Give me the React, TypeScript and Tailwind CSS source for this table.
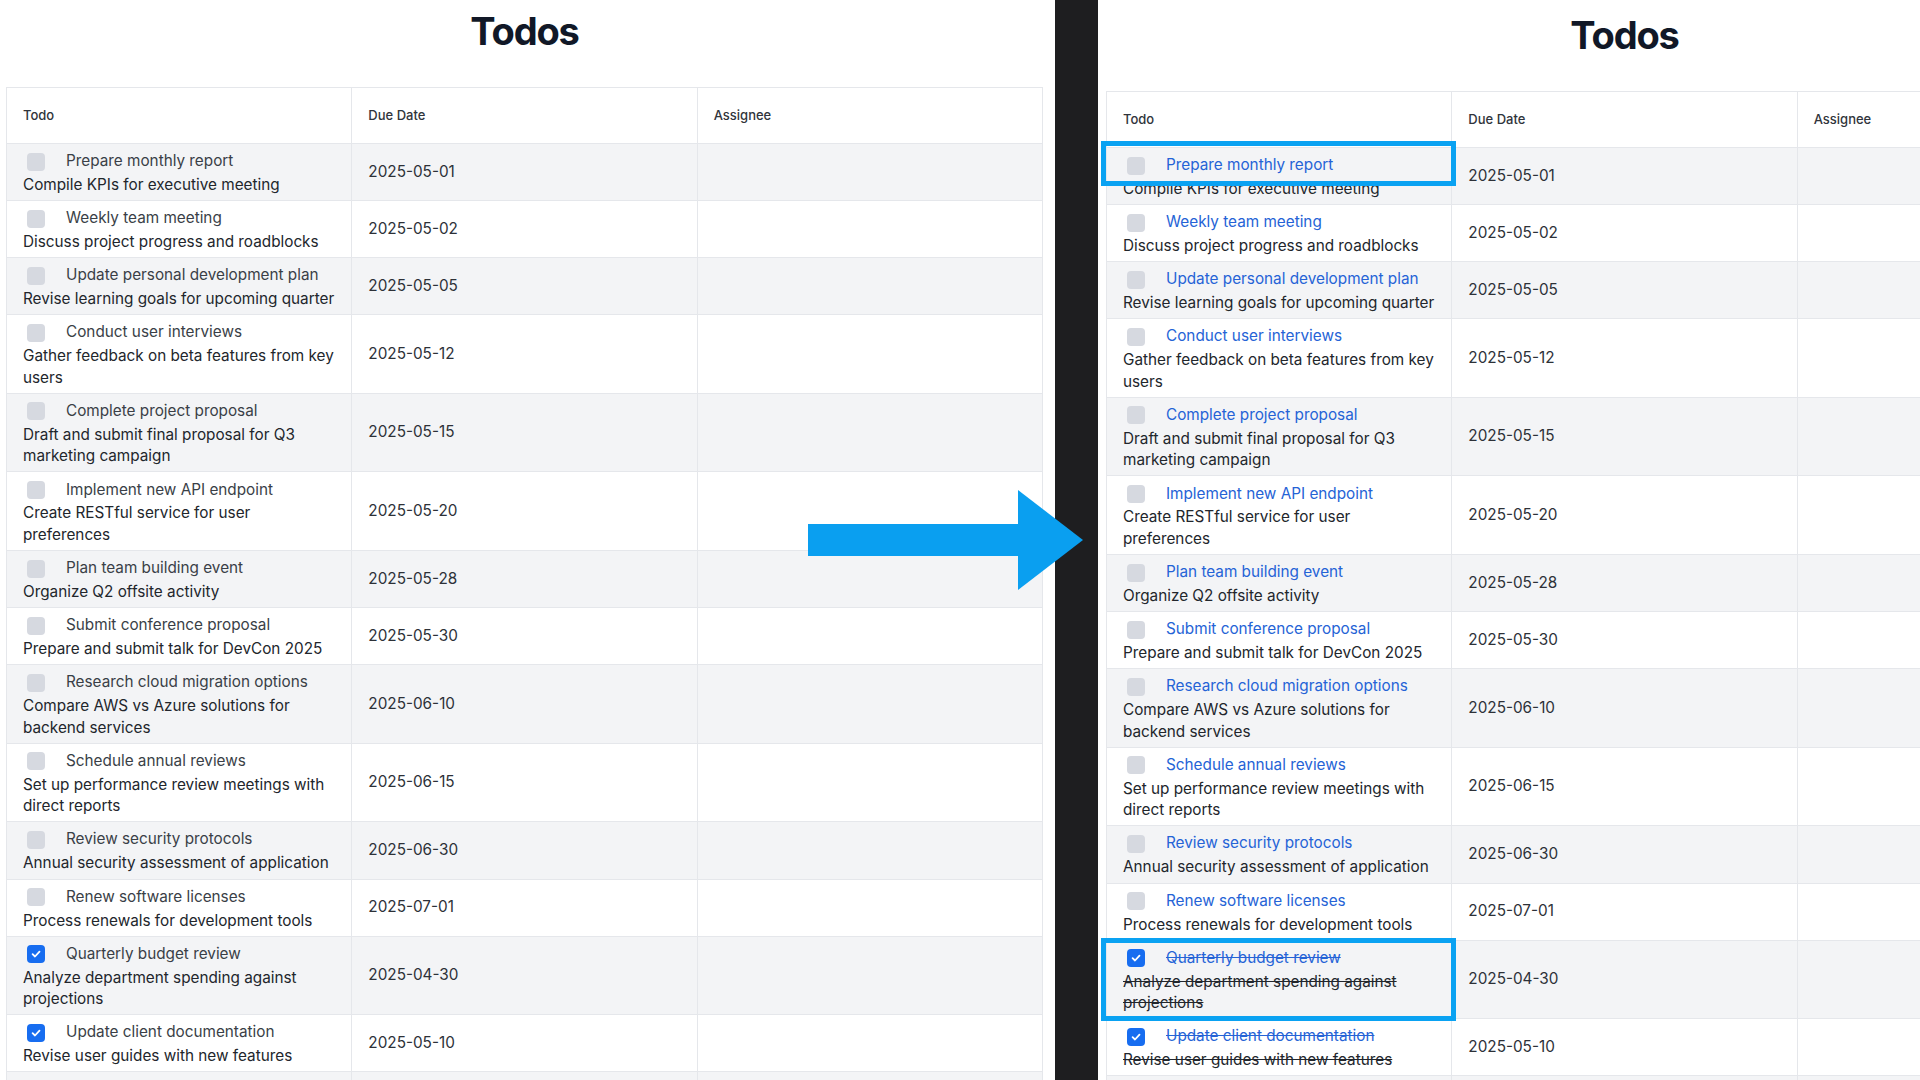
import React from "react";

type Todo = {
  title: string;
  desc: string[];
  due: string;
  done?: boolean;
};

const todos: Todo[] = [
  { title: "Prepare monthly report", desc: ["Compile KPIs for executive meeting"], due: "2025-05-01" },
  { title: "Weekly team meeting", desc: ["Discuss project progress and roadblocks"], due: "2025-05-02" },
  { title: "Update personal development plan", desc: ["Revise learning goals for upcoming quarter"], due: "2025-05-05" },
  { title: "Conduct user interviews", desc: ["Gather feedback on beta features from key", "users"], due: "2025-05-12" },
  { title: "Complete project proposal", desc: ["Draft and submit final proposal for Q3", "marketing campaign"], due: "2025-05-15" },
  { title: "Implement new API endpoint", desc: ["Create RESTful service for user", "preferences"], due: "2025-05-20" },
  { title: "Plan team building event", desc: ["Organize Q2 offsite activity"], due: "2025-05-28" },
  { title: "Submit conference proposal", desc: ["Prepare and submit talk for DevCon 2025"], due: "2025-05-30" },
  { title: "Research cloud migration options", desc: ["Compare AWS vs Azure solutions for", "backend services"], due: "2025-06-10" },
  { title: "Schedule annual reviews", desc: ["Set up performance review meetings with", "direct reports"], due: "2025-06-15" },
  { title: "Review security protocols", desc: ["Annual security assessment of application"], due: "2025-06-30" },
  { title: "Renew software licenses", desc: ["Process renewals for development tools"], due: "2025-07-01" },
  { title: "Quarterly budget review", desc: ["Analyze department spending against", "projections"], due: "2025-04-30", done: true },
  { title: "Update client documentation", desc: ["Revise user guides with new features"], due: "2025-05-10", done: true },
];

function Checkbox({ checked }: { checked?: boolean }) {
  if (checked) {
    return (
      <span className="ml-[4px] mr-[21px] flex h-[18px] w-[18px] shrink-0 items-center justify-center rounded-[4px] bg-[#176df0]">
        <svg width="12" height="12" viewBox="0 0 12 12" fill="none">
          <path d="M2.6 6.2 5 8.5 9.5 3.7" stroke="white" strokeWidth="1.8" strokeLinecap="round" strokeLinejoin="round" />
        </svg>
      </span>
    );
  }
  return <span className="ml-[4px] mr-[21px] h-[18px] w-[18px] shrink-0 rounded-[4px] bg-[#d6d9e0]" />;
}

function TodoPage({ after }: { after?: boolean }) {
  return (
    <div className="w-[1049px] shrink-0 px-[6px] pt-[11px]">
      <h1 className="h-[40px] text-center text-[38px] leading-[40px] font-bold tracking-[-0.03em] text-[#111827]">Todos</h1>
      <table className="mt-[36px] w-full table-fixed border-collapse border border-[#e5e7eb] text-[15.3px]">
        <thead>
          <tr className="h-[56px] border-b border-[#e5e7eb]">
            <th className="border-r border-[#e5e7eb] px-4 text-left text-[13px] font-medium text-[#30343b]">Todo</th>
            <th className="border-r border-[#e5e7eb] px-4 text-left text-[13px] font-medium text-[#30343b]">Due Date</th>
            <th className="px-4 text-left text-[13px] font-medium text-[#30343b]">Assignee</th>
          </tr>
        </thead>
        <tbody>
          {todos.map((t, i) => {
            const struck = after && t.done;
            return (
              <tr key={t.title} className={`border-b border-[#e5e7eb] ${i % 2 === 0 ? "bg-[#f3f4f6]" : "bg-white"}`}>
                <td className="border-r border-[#e5e7eb] px-4 pt-[5px] pb-[4.6px] align-top">
                  <div className="flex h-[25px] items-center">
                    <Checkbox checked={t.done} />
                    <span
                      className={`whitespace-nowrap ${after ? "text-[#2563d6]" : "text-[#3a3f47]"} ${struck ? "line-through" : ""}`}
                    >
                      {t.title}
                    </span>
                  </div>
                  {t.desc.map((line) => (
                    <div
                      key={line}
                      className={`whitespace-nowrap leading-[21.5px] text-[#22262c] ${struck ? "line-through" : ""}`}
                    >
                      {line}
                    </div>
                  ))}
                </td>
                <td className="border-r border-[#e5e7eb] px-4 align-middle text-[#2d3138]">{t.due}</td>
                <td className="px-4" />
              </tr>
            );
          })}
          {/* next row, only its top edge is in view */}
          <tr className="h-[57px] bg-[#f3f4f6]">
            <td className="border-r border-[#e5e7eb]" />
            <td className="border-r border-[#e5e7eb]" />
            <td />
          </tr>
        </tbody>
      </table>
    </div>
  );
}

export default function App() {
  return (
    <div className="relative flex h-[1080px] w-[1920px] overflow-hidden bg-white font-[family-name:Inter,'Liberation_Sans',sans-serif]">
      <div className="w-[1055px] shrink-0 overflow-hidden bg-white">
        <TodoPage />
      </div>
      <div className="w-[43px] shrink-0 bg-[#1e1e20]" />
      <div className="flex-1 overflow-hidden bg-white pl-[2px] pt-[4px]">
        <TodoPage after />
      </div>

      {/* arrow overlay */}
      <svg className="absolute left-0 top-0" width="1920" height="1080" viewBox="0 0 1920 1080" fill="none">
        <rect x="808" y="524" width="212" height="32" fill="#0a9ff0" />
        <polygon points="1018,490 1083,540 1018,590" fill="#0a9ff0" />
      </svg>

      {/* highlight boxes */}
      <div className="absolute left-[1101px] top-[141px] h-[45px] w-[355px] border-[5px] border-[#0aa2f2]" />
      <div className="absolute left-[1101px] top-[938px] h-[83px] w-[355px] border-[5px] border-[#0aa2f2]" />
    </div>
  );
}
